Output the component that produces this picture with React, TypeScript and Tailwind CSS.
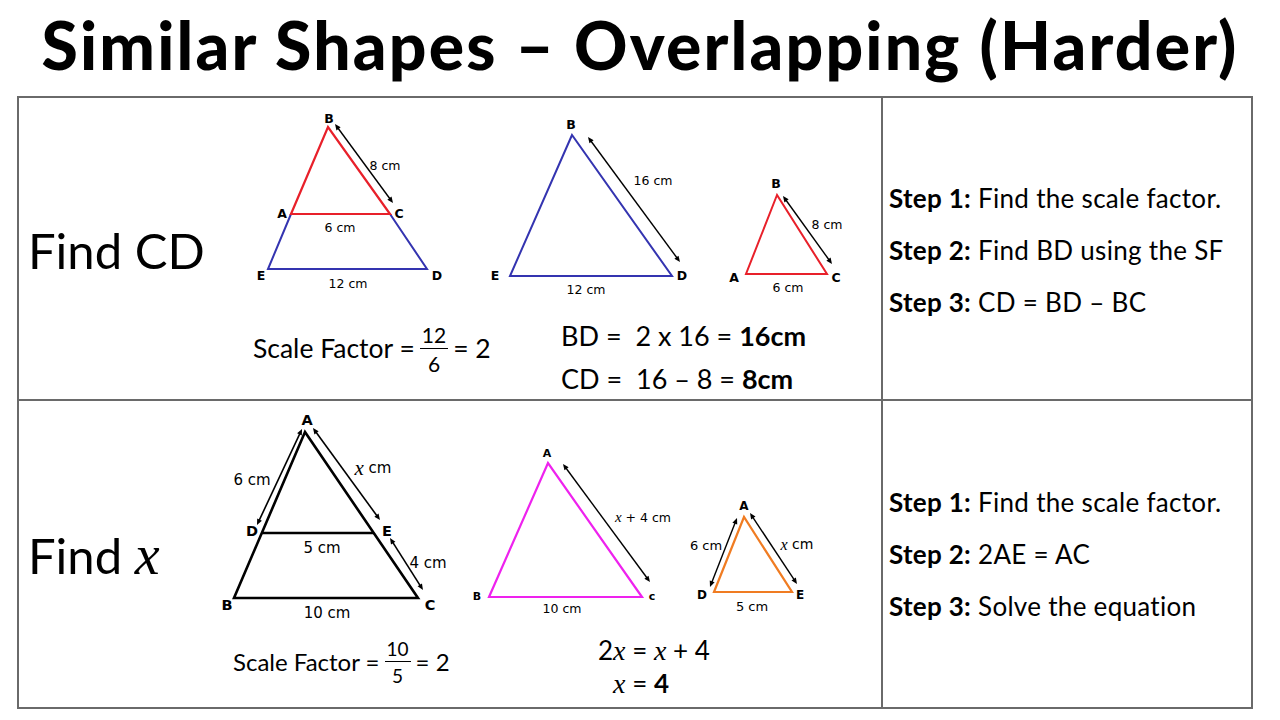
import React from "react";

const RED = "#e8202a";
const BLUE = "#3434b0";
const MAG = "#ee22ee";
const ORANGE = "#f07c22";

function Arrow({ x1, y1, x2, y2, w = 1.4 }: { x1: number; y1: number; x2: number; y2: number; w?: number }) {
  const dx = x2 - x1;
  const dy = y2 - y1;
  const L = Math.hypot(dx, dy);
  const ux = dx / L;
  const uy = dy / L;
  const px = -uy;
  const py = ux;
  const h = 6;
  const hw = 2.6;
  const head = (tx: number, ty: number, dirx: number, diry: number) => {
    const bx = tx - dirx * h;
    const by = ty - diry * h;
    return `${tx},${ty} ${bx + px * hw},${by + py * hw} ${bx - px * hw},${by - py * hw}`;
  };
  return (
    <g>
      <line x1={x1 + ux * 4} y1={y1 + uy * 4} x2={x2 - ux * 4} y2={y2 - uy * 4} stroke="#000" strokeWidth={w} />
      <polygon points={head(x1, y1, -ux, -uy)} fill="#000" />
      <polygon points={head(x2, y2, ux, uy)} fill="#000" />
    </g>
  );
}

function L({ x, y, t, s = 12.5, bold = true }: { x: number; y: number; t: string; s?: number; bold?: boolean }) {
  return (
    <text
      x={x}
      y={y}
      textAnchor="middle"
      dominantBaseline="central"
      fontFamily="'DejaVu Sans', Verdana, sans-serif"
      fontWeight={bold ? 700 : 400}
      fontSize={s}
      fill="#000"
    >
      {t}
    </text>
  );
}

function XL({ x, y, rest, s = 13, xs = 16 }: { x: number; y: number; rest: string; s?: number; xs?: number }) {
  return (
    <text
      x={x}
      y={y}
      textAnchor="middle"
      dominantBaseline="central"
      fontFamily="'DejaVu Sans', Verdana, sans-serif"
      fontSize={s}
      fill="#000"
    >
      <tspan fontFamily="'Liberation Serif', serif" fontStyle="italic" fontSize={xs}>
        x
      </tspan>
      {rest}
    </text>
  );
}

function Frac({ n, d, big }: { n: string; d: string; big?: boolean }) {
  return (
    <span
      className={
        big
          ? "inline-flex flex-col items-center align-middle leading-none mx-[5px] text-[21px]"
          : "inline-flex flex-col items-center align-middle leading-none mx-[5px] text-[19px]"
      }
    >
      <span className="px-[2px] pb-[3px] border-b border-black">{n}</span>
      <span className="pt-[4px]">{d}</span>
    </span>
  );
}

function Row1Diagram() {
  return (
    <svg width={639} height={201} viewBox="240 98 639 201" className="block">
      <polyline points="291,214 268,269 427,269 390,214" fill="none" stroke={BLUE} strokeWidth={2} />
      <polygon points="291,214 328,127 390,214" fill="none" stroke={RED} strokeWidth={2.2} />
      <Arrow x1={335} y1={124} x2={393} y2={203} />
      <L x={329} y={118} t="B" />
      <L x={282} y={213} t="A" />
      <L x={399} y={213} t="C" />
      <L x={261} y={275} t="E" />
      <L x={437} y={275} t="D" />
      <L x={385} y={165} t="8 cm" bold={false} />
      <L x={340} y={227} t="6 cm" bold={false} />
      <L x={348} y={283} t="12 cm" bold={false} />
      <polygon points="572,135 510,276 672,276" fill="none" stroke={BLUE} strokeWidth={2} />
      <Arrow x1={588} y1={137} x2={680} y2={262} />
      <L x={571} y={124} t="B" />
      <L x={495} y={275} t="E" />
      <L x={682} y={275} t="D" />
      <L x={653} y={180} t="16 cm" bold={false} />
      <L x={586} y={289} t="12 cm" bold={false} />
      <polygon points="777,195 746,274 827,274" fill="none" stroke={RED} strokeWidth={2} />
      <Arrow x1={783} y1={196} x2={832} y2={264} />
      <L x={776} y={183} t="B" />
      <L x={734} y={277} t="A" />
      <L x={836} y={277} t="C" />
      <L x={827} y={224} t="8 cm" bold={false} />
      <L x={788} y={287} t="6 cm" bold={false} />
    </svg>
  );
}

function Row2Diagram() {
  return (
    <svg width={669} height={223} viewBox="210 401 669 223" className="block">
      <polygon points="305,432 234,598 418,598" fill="none" stroke="#000" strokeWidth={2.6} strokeLinejoin="miter" />
      <line x1={262} y1={533} x2={374} y2={533} stroke="#000" strokeWidth={2.4} />
      <Arrow x1={302} y1={429} x2={257} y2={525} w={1.6} />
      <Arrow x1={313} y1={428} x2={380} y2={520} w={1.6} />
      <Arrow x1={390} y1={538} x2={423} y2={590} w={1.6} />
      <L x={307} y={420} t="A" s={14.5} />
      <L x={252} y={531} t="D" s={14.5} />
      <L x={387} y={531} t="E" s={14.5} />
      <L x={227} y={605} t="B" s={14.5} />
      <L x={430} y={605} t="C" s={14.5} />
      <L x={252} y={480} t="6 cm" s={15} bold={false} />
      <XL x={373} y={468} rest=" cm" s={15} xs={21} />
      <L x={322} y={548} t="5 cm" s={15} bold={false} />
      <L x={428} y={563} t="4 cm" s={15} bold={false} />
      <L x={327} y={613} t="10 cm" s={15} bold={false} />
      <polygon points="548,463 489,597 642,597" fill="none" stroke={MAG} strokeWidth={2.2} />
      <Arrow x1={563} y1={464} x2={650} y2={582} />
      <L x={547} y={453} t="A" s={11} />
      <L x={477} y={596} t="B" s={11} />
      <L x={652} y={596} t="c" s={11} />
      <XL x={643} y={517} rest=" + 4 cm" s={12.5} xs={15} />
      <L x={562} y={608} t="10 cm" s={12.5} bold={false} />
      <polygon points="744,517 714,592 792,592" fill="none" stroke={ORANGE} strokeWidth={2.2} />
      <Arrow x1={737} y1={518} x2={710} y2={587} />
      <Arrow x1={750} y1={513} x2={797} y2={584} />
      <L x={744} y={506} t="A" s={12} />
      <L x={702} y={595} t="D" s={12} />
      <L x={800} y={595} t="E" s={12} />
      <L x={706} y={545} t="6 cm" s={13} bold={false} />
      <XL x={797} y={544} rest=" cm" s={14} xs={16} />
      <L x={752} y={606} t="5 cm" s={13} bold={false} />
    </svg>
  );
}

const X = () => <span className="font-['Liberation_Serif',serif] italic text-[28px]">x</span>;

export default function App() {
  return (
    <div className="w-[1280px] h-[720px] bg-white text-black font-['Lato','Liberation_Sans',sans-serif] overflow-hidden">
      <div className="h-[96px] flex items-center justify-center">
        <h1 className="font-['Lato',sans-serif] font-black text-[66px] leading-none tracking-[2.2px] pb-[6px]">
          Similar Shapes – Overlapping (Harder)
        </h1>
      </div>
      <div className="ml-[17px] w-[1236px] border-2 border-[#6a6a6a] grid grid-cols-[864px_1fr]">
        <div className="h-[303px] border-r-2 border-b-2 border-[#6a6a6a] flex">
          <div className="w-[221px] pl-[9px] flex items-center">
            <span className="text-[49px] leading-none pt-[4px]">Find CD</span>
          </div>
          <div className="flex flex-col">
            <Row1Diagram />
            <div className="h-[100px] flex">
              <div className="w-[321px] pl-[13px] flex items-center text-[26.5px]">
                <span>Scale Factor =</span>
                <Frac n="12" d="6" big />
                <span>= 2</span>
              </div>
              <div className="pt-[15px] text-[27px] leading-[43px] whitespace-pre">
                <div>
                  BD =  2 x 16 = <b>16cm</b>
                </div>
                <div>
                  CD =  16 – 8 = <b>8cm</b>
                </div>
              </div>
            </div>
          </div>
        </div>
        <div className="h-[303px] border-b-2 border-[#6a6a6a] pl-[6px] pt-[3px] flex flex-col justify-center text-[26px] tracking-[0.3px] leading-[52px]">
          <div>
            <b>Step 1:</b> Find the scale factor.
          </div>
          <div>
            <b>Step 2:</b> Find BD using the SF
          </div>
          <div>
            <b>Step 3:</b> CD = BD – BC
          </div>
        </div>
        <div className="h-[306px] border-r-2 border-[#6a6a6a] flex">
          <div className="w-[191px] pl-[9px] flex items-center">
            <span className="text-[49px] leading-none pt-[2px]">
              Find <span className="font-['Liberation_Serif',serif] italic text-[56px]">x</span>
            </span>
          </div>
          <div className="flex flex-col">
            <Row2Diagram />
            <div className="h-[76px] flex">
              <div className="w-[388px] pl-[23px] flex items-center text-[24px]">
                <span>Scale Factor =</span>
                <Frac n="10" d="5" />
                <span>= 2</span>
              </div>
              <div className="pt-[9px] text-[26px] leading-[33px] grid grid-cols-[auto_auto] self-center">
                <div className="text-right">
                  2<X />
                </div>
                <div className="whitespace-pre">
                  {" = "}
                  <X /> + 4
                </div>
                <div className="text-right">
                  <X />
                </div>
                <div className="whitespace-pre">
                  {" = "}
                  <b>4</b>
                </div>
              </div>
            </div>
          </div>
        </div>
        <div className="h-[306px] pl-[6px] flex flex-col justify-center text-[26px] tracking-[0.3px] leading-[52px]">
          <div>
            <b>Step 1:</b> Find the scale factor.
          </div>
          <div>
            <b>Step 2:</b> 2AE = AC
          </div>
          <div>
            <b>Step 3:</b> Solve the equation
          </div>
        </div>
      </div>
    </div>
  );
}
